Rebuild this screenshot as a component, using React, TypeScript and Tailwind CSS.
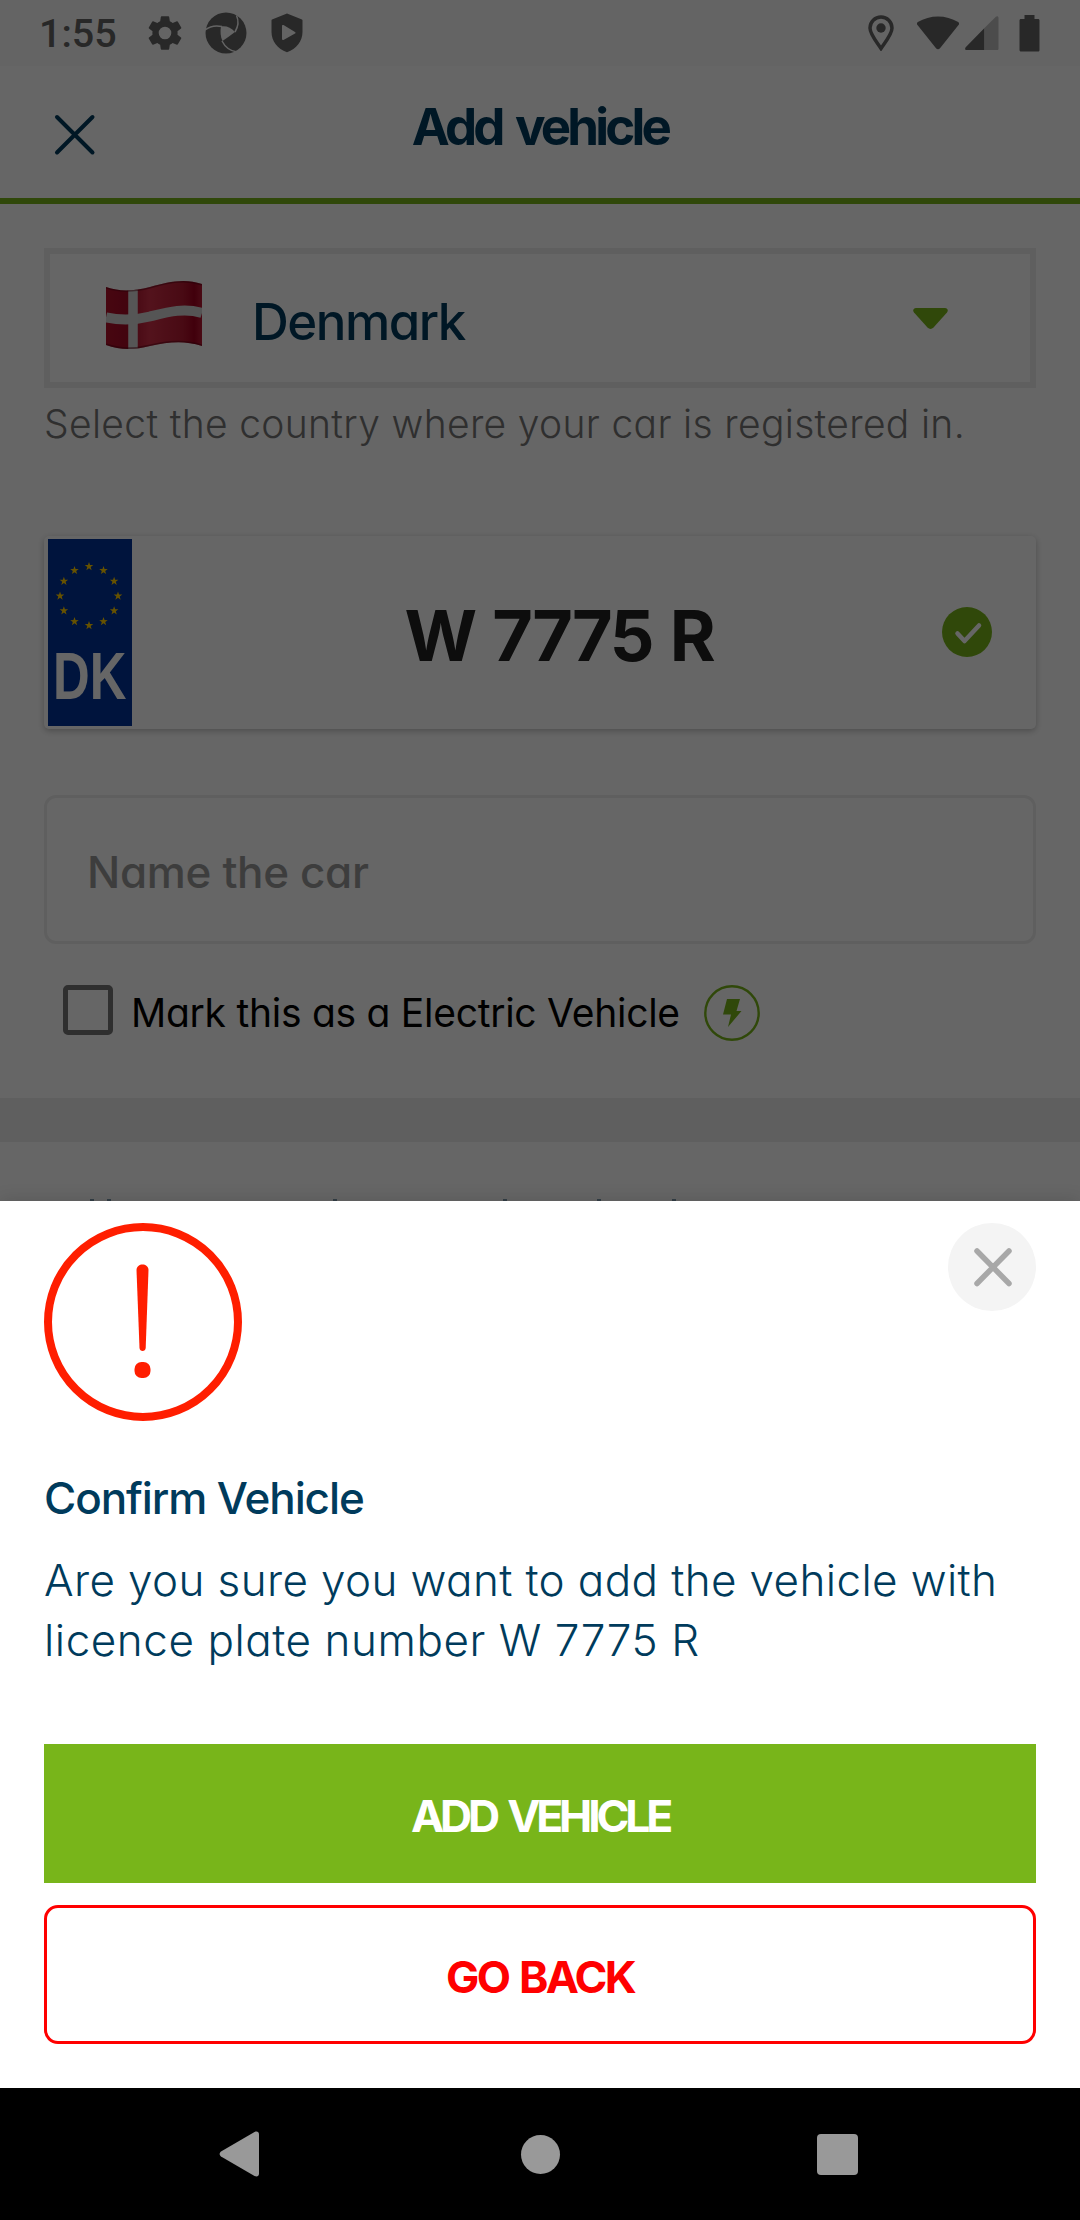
import type { ReactNode } from 'react';

const STARS = Array.from({ length: 12 }, (_, i) => i * 30);

function GearIcon() {
  return (
    <svg width="42" height="42" viewBox="0 0 24 24" fill="currentColor">
      <path d="M19.14 12.94c.04-.3.06-.61.06-.94 0-.32-.02-.64-.07-.94l2.03-1.58a.49.49 0 0 0 .12-.61l-1.92-3.32a.49.49 0 0 0-.59-.22l-2.39.96c-.5-.38-1.03-.7-1.62-.94l-.36-2.54a.48.48 0 0 0-.48-.41h-3.84c-.24 0-.43.17-.47.41l-.36 2.54c-.59.24-1.13.57-1.62.94l-2.39-.96a.48.48 0 0 0-.59.22L2.74 8.87c-.12.21-.08.47.12.61l2.03 1.58c-.05.3-.09.63-.09.94s.02.64.07.94l-2.03 1.58a.49.49 0 0 0-.12.61l1.92 3.32c.12.22.37.29.59.22l2.39-.96c.5.38 1.03.7 1.62.94l.36 2.54c.05.24.24.41.48.41h3.84c.24 0 .44-.17.47-.41l.36-2.54c.59-.24 1.13-.56 1.62-.94l2.39.96c.22.08.47 0 .59-.22l1.92-3.32a.49.49 0 0 0-.12-.61l-2.01-1.58zM12 15.6A3.6 3.6 0 1 1 12 8.4a3.6 3.6 0 0 1 0 7.2z" />
    </svg>
  );
}

function ApertureIcon() {
  return (
    <svg width="42" height="42" viewBox="0 0 42 42">
      <circle cx="21" cy="21" r="20.5" fill="currentColor" />
      <g fill="none" stroke="#fafafa" strokeWidth="1.5">
        <path d="M0 18C5 14 10 13 17 14.500" />
        <path d="M31.500 3.500C34 9 33 15 30 20" />
        <path d="M17 29C20 35 25 39 32 40" />
      </g>
      <path d="M16 14.500c5-1 10 1 14 5.500-4 3-8 6-12.500 9-2-4-2.500-10-1.500-14.500z" fill="#fafafa" />
    </svg>
  );
}

function ShieldPlayIcon() {
  return (
    <svg width="32" height="40" viewBox="0 0 32 40" fill="currentColor">
      <path fillRule="evenodd" d="M16 .5 31 6.500a1 1 0 0 1 .5 1V19c0 9-6 17-15.500 20.200C6.500 36 .5 28 .5 19V7.500a1 1 0 0 1 .5-1zM11 13v13c0 1 .8 1.300 1.500.9l11.500-6.300c.8-.5.800-1.200 0-1.700L12.500 12.100c-.7-.4-1.500 0-1.500.9z" />
    </svg>
  );
}

function StatusBar() {
  return (
    <div className="flex h-[66px] items-center bg-[#fafafa] pl-[39px] pr-10 text-[#646464]">
      <span className="w-[105px] pt-[2px] font-[Roboto] text-[39.5px] leading-[64px] font-medium">1:55</span>
      <div className="flex items-center">
        <GearIcon />
        <span className="ml-[19px]"><ApertureIcon /></span>
        <span className="ml-6"><ShieldPlayIcon /></span>
      </div>
      <div className="ml-auto flex items-center">
        <svg width="26" height="36" viewBox="0 0 26 36" fill="none" stroke="currentColor">
          <path d="M13 33.500C8 26 2 19 2 13a11 11 0 0 1 22 0c0 6-6 13-11 20.500z" strokeWidth="3.500" />
          <circle cx="13" cy="13" r="4.700" fill="currentColor" stroke="none" />
        </svg>
        <svg className="ml-[22px]" width="44" height="34" viewBox="0 0 44 34" fill="currentColor">
          <path d="M1.500 9C.6 8 .8 6.800 1.800 6 14-1.500 30-1.500 42.200 6c1 .8 1.200 2 .3 3L24 32.300c-1.200 1.400-2.800 1.400-4 0z" />
        </svg>
        <svg className="ml-[5px]" width="34" height="34" viewBox="0 0 34 34">
          <path d="M1.500 34C0 34-.3 32.300.7 31.300L19.500 12v22z" fill="currentColor" />
          <path d="M19.500 34V12L30.800.8C32-.3 33.500.2 33.500 1.800v30.700c0 1-.5 1.500-1.500 1.500z" fill="#bebebe" />
        </svg>
        <svg className="ml-5" width="21" height="37" viewBox="0 0 21 37" fill="currentColor">
          <path d="M5.500 0h10v4H19c1 0 1.500.6 1.500 1.500v29.500c0 1-.6 1.500-1.500 1.500H2c-1 0-1.500-.6-1.500-1.500V5.500C.5 4.600 1 4 2 4h3.500z" />
        </svg>
      </div>
    </div>
  );
}

function Header() {
  return (
    <header className="grid h-[138px] grid-cols-[140px_1fr_140px] border-b-[6px] border-[#78b51a]">
      <svg className="mt-[48px] ml-[54px]" width="42" height="42" viewBox="0 0 42 42" stroke="#003b5c" strokeWidth="4" strokeLinecap="round">
        <path d="M3 3 38.500 38.500M38.500 3 3 38.500" />
      </svg>
      <h1 className="text-center text-[51px] leading-[121px] font-bold tracking-[-3.8px] text-[#003b5c] [word-spacing:5px]">Add vehicle</h1>
    </header>
  );
}

function DanishFlag() {
  return (
    <svg className="mb-2" width="96" height="70" viewBox="0 0 96 70">
      <defs>
        <linearGradient id="cloth" x1="0" x2="1" y1="0" y2="0">
          <stop offset="0" stopColor="#b3112b" />
          <stop offset="0.220" stopColor="#a60a26" />
          <stop offset="0.450" stopColor="#d03048" />
          <stop offset="0.800" stopColor="#b51a32" />
          <stop offset="0.920" stopColor="#a2001f" />
          <stop offset="1" stopColor="#b81b35" />
        </linearGradient>
        <clipPath id="wave">
          <path d="M0 8c14 5 28 4 44 0C62 3 78-1 96 5v62c-18-6-34-4-52 0-16 4-30 4-44-1z" />
        </clipPath>
      </defs>
      <g clipPath="url(#wave)">
        <rect width="96" height="70" fill="url(#cloth)" />
        <path d="M0 38.500c14 3 28 3 44-1 18-4.500 34-9 52-3.500" fill="none" stroke="#d4d4d4" strokeWidth="10" />
        <path d="M27 0v70" stroke="#d8d8d8" strokeWidth="9.500" />
        <path d="M0 8c14 5 28 4 44 0C62 3 78-1 96 5M96 67c-18-6-34-4-52 0-16 4-30 4-44-1" fill="none" stroke="#5a0012" strokeOpacity="0.500" strokeWidth="3" />
      </g>
    </svg>
  );
}

function CountrySelect() {
  return (
    <div className="flex h-[140px] items-center border-[6px] border-[#eeeeee] bg-white pl-[56px] pr-[82px]">
      <DanishFlag />
      <span className="ml-[50px] pt-[7px] text-[51px] leading-[60px] font-medium tracking-[-1.5px] text-[#003b5c]">Denmark</span>
      <svg className="ml-auto" width="35" height="21" viewBox="0 0 35 21" fill="#78b51a">
        <path d="M3 0h29c2.500 0 3.600 2.500 2 4.500L20.500 19.500c-1.800 1.900-4.200 1.900-6 0L1 4.500C-.6 2.500.5 0 3 0z" />
      </svg>
    </div>
  );
}

function EuBand() {
  return (
    <div className="flex w-[84px] flex-col items-center bg-[#003399]">
      <svg className="mt-[18px] shrink-0" width="84" height="78" viewBox="-42 -39 84 78" fill="#ffcc00">
        {STARS.map((a) => {
          const r = (a * Math.PI) / 180;
          return (
            <path
              key={a}
              transform={`translate(${(29 * Math.sin(r) - 1).toFixed(2)} ${(-29.5 * Math.cos(r)).toFixed(2)}) scale(4.500)`}
              d="M0-1 .235-.323.951-.309.380.124.588.809 0 .4-.588.809-.380.124-.951-.309-.235-.323z"
            />
          );
        })}
      </svg>
      <span className="mt-[11px] scale-x-[0.770] font-['Liberation_Sans'] text-[66px] leading-[60px] font-bold text-white">DK</span>
    </div>
  );
}

function PlateCard() {
  return (
    <div className="mt-[77px] flex h-[193px] items-center rounded-[5px] bg-white pr-11 pl-1 shadow-[0_2px_6px_rgba(0,0,0,0.250)]">
      <div className="flex h-[187px]"><EuBand /></div>
      <span className="flex-1 pt-[7px] pl-11 text-center text-[70px] leading-[80px] font-bold tracking-[-2.200px] text-[#212121] [word-spacing:3px]">W 7775 R</span>
      <svg className="mb-px" width="50" height="50" viewBox="0 0 50 50">
        <circle cx="25" cy="25" r="25" fill="#78b51a" />
        <path d="M15.500 26.500 22.500 34 37 18.500" fill="none" stroke="#fff" strokeWidth="4.500" strokeLinecap="round" strokeLinejoin="round" />
      </svg>
    </div>
  );
}

function ElectricRow() {
  return (
    <div className="mt-[41px] flex h-14 items-start pl-[19px]">
      <span className="size-[50px] rounded-[5px] border-[5.500px] border-[#757575]" />
      <span className="ml-[18px] w-[573px] text-[39px] leading-[55px] font-normal tracking-[-0.270px] whitespace-nowrap text-black">Mark this as a Electric Vehicle</span>
      <svg width="56" height="56" viewBox="0 0 56 56">
        <circle cx="28" cy="28" r="26.700" fill="none" stroke="#78b51a" strokeWidth="2.400" />
        <path d="M23 14h13l-3.500 12H37.500L24 42l3-12.500h-8z" fill="#78b51a" />
      </svg>
    </div>
  );
}

/* The first line of the section below only peeks out above the sheet. */
function NextSectionPeek() {
  return (
    <div className="mt-[57px] flex items-start pl-[90px]">
      <span className="h-[3px] w-1 bg-[#7f9bb0]" />
      <span className="ml-[13px] h-[3px] w-1 bg-[#7f9bb0]" />
      <span className="ml-[222px] h-[3px] w-1 bg-[#7f9bb0]" />
      <span className="ml-[166px] h-[3px] w-1 bg-[#7f9bb0]" />
      <span className="ml-[90px] h-[3px] w-1 bg-[#7f9bb0]" />
      <span className="ml-[71px] h-[3px] w-1 bg-[#7f9bb0]" />
    </div>
  );
}

function ActionButton({ children, look }: { children: ReactNode; look: string }) {
  return <button className={`flex h-[139px] w-full items-center justify-center pt-1.5 text-[44.500px] leading-none font-bold ${look}`}>{children}</button>;
}

function ConfirmSheet() {
  return (
    <section className="absolute inset-x-0 bottom-0 h-[887px] bg-white px-11 pt-[22px] shadow-[0_-2px_16px_rgba(0,0,0,0.120)]">
      <div className="flex items-start justify-between">
        <svg width="198" height="198" viewBox="0 0 198 198" fill="#ff1e00">
          <circle cx="99" cy="99" r="95" fill="none" stroke="#ff1e00" strokeWidth="8" />
          <path d="M92.500 47c0-7.500 12-7.500 12 0l-2.800 78c-.2 4-6 4-6.200 0z" />
          <rect x="90.500" y="139" width="16" height="16" rx="7" />
        </svg>
        <button className="flex size-[88px] items-center justify-center rounded-full bg-[#f4f4f4]">
          <svg width="40" height="40" viewBox="0 0 40 40" stroke="#a8a8a8" strokeWidth="5.500" strokeLinecap="round">
            <path d="M5 4 37 36.500M37 4 5 36.500" />
          </svg>
        </button>
      </div>
      <h2 className="mt-[47px] text-[44px] leading-[60px] font-medium tracking-[-1.100px] text-[#003b5c]">Confirm Vehicle</h2>
      <p className="mt-[22px] text-[44px] leading-[60px] font-light tracking-[0.380px] whitespace-nowrap text-[#003b5c]">
        Are you sure you want to add the vehicle with
        <br />
        <span className="tracking-[0.550px]">licence plate number W 7775 R</span>
      </p>
      <div className="mt-[74px] flex flex-col gap-[22px]">
        <ActionButton look="bg-[#78b51a] tracking-[-4.200px] text-white [word-spacing:5px]">ADD VEHICLE</ActionButton>
        <ActionButton look="rounded-[14px] border-[3px] border-[#ff0000] tracking-[-2.700px] text-[#ff0000] [word-spacing:3px]">GO BACK</ActionButton>
      </div>
    </section>
  );
}

function NavigationBar() {
  return (
    <nav className="flex h-[132px] items-center bg-black pl-[219px] pr-[222px] text-[#999999]">
      <svg width="40" height="46" viewBox="0 0 40 46" fill="currentColor">
        <path d="M2 20.500 35.500 1C38 0 40 .8 40 3.500v39c0 2.700-2 3.500-4.500 2.500L2 25.500c-1.800-1.300-1.800-3.700 0-5z" />
      </svg>
      <span className="ml-[262px] size-[39px] rounded-full bg-[#999999]" />
      <span className="ml-auto size-[41px] rounded-[4px] bg-[#999999]" />
    </nav>
  );
}

export default function App() {
  return (
    <div className="flex h-[2220px] w-[1080px] flex-col bg-white font-['Inter',sans-serif] [font-feature-settings:'cv11']">
      <div className="relative h-[2088px] overflow-hidden bg-white">
        <StatusBar />
        <Header />
        <main className="flex flex-col px-11 pt-11">
          <CountrySelect />
          <p className="mt-px text-[39px] leading-[70px] font-light tracking-[0.330px] whitespace-nowrap text-[#757575]">Select the country where your car is registered in.</p>
          <PlateCard />
          <div className="mt-[66px] flex h-[149px] items-center rounded-xl border-[3px] border-[#eeeeee] pt-[5px] pl-[40px] text-[44px] leading-[60px] font-medium tracking-[-0.350px] text-[#9a9a9a]">Name the car</div>
          <ElectricRow />
        </main>
        <div className="mt-[57px] h-[44px] bg-[#eeeeee]" />
        <NextSectionPeek />
        <div className="absolute inset-0 bg-black/60" />
        <ConfirmSheet />
      </div>
      <NavigationBar />
    </div>
  );
}
